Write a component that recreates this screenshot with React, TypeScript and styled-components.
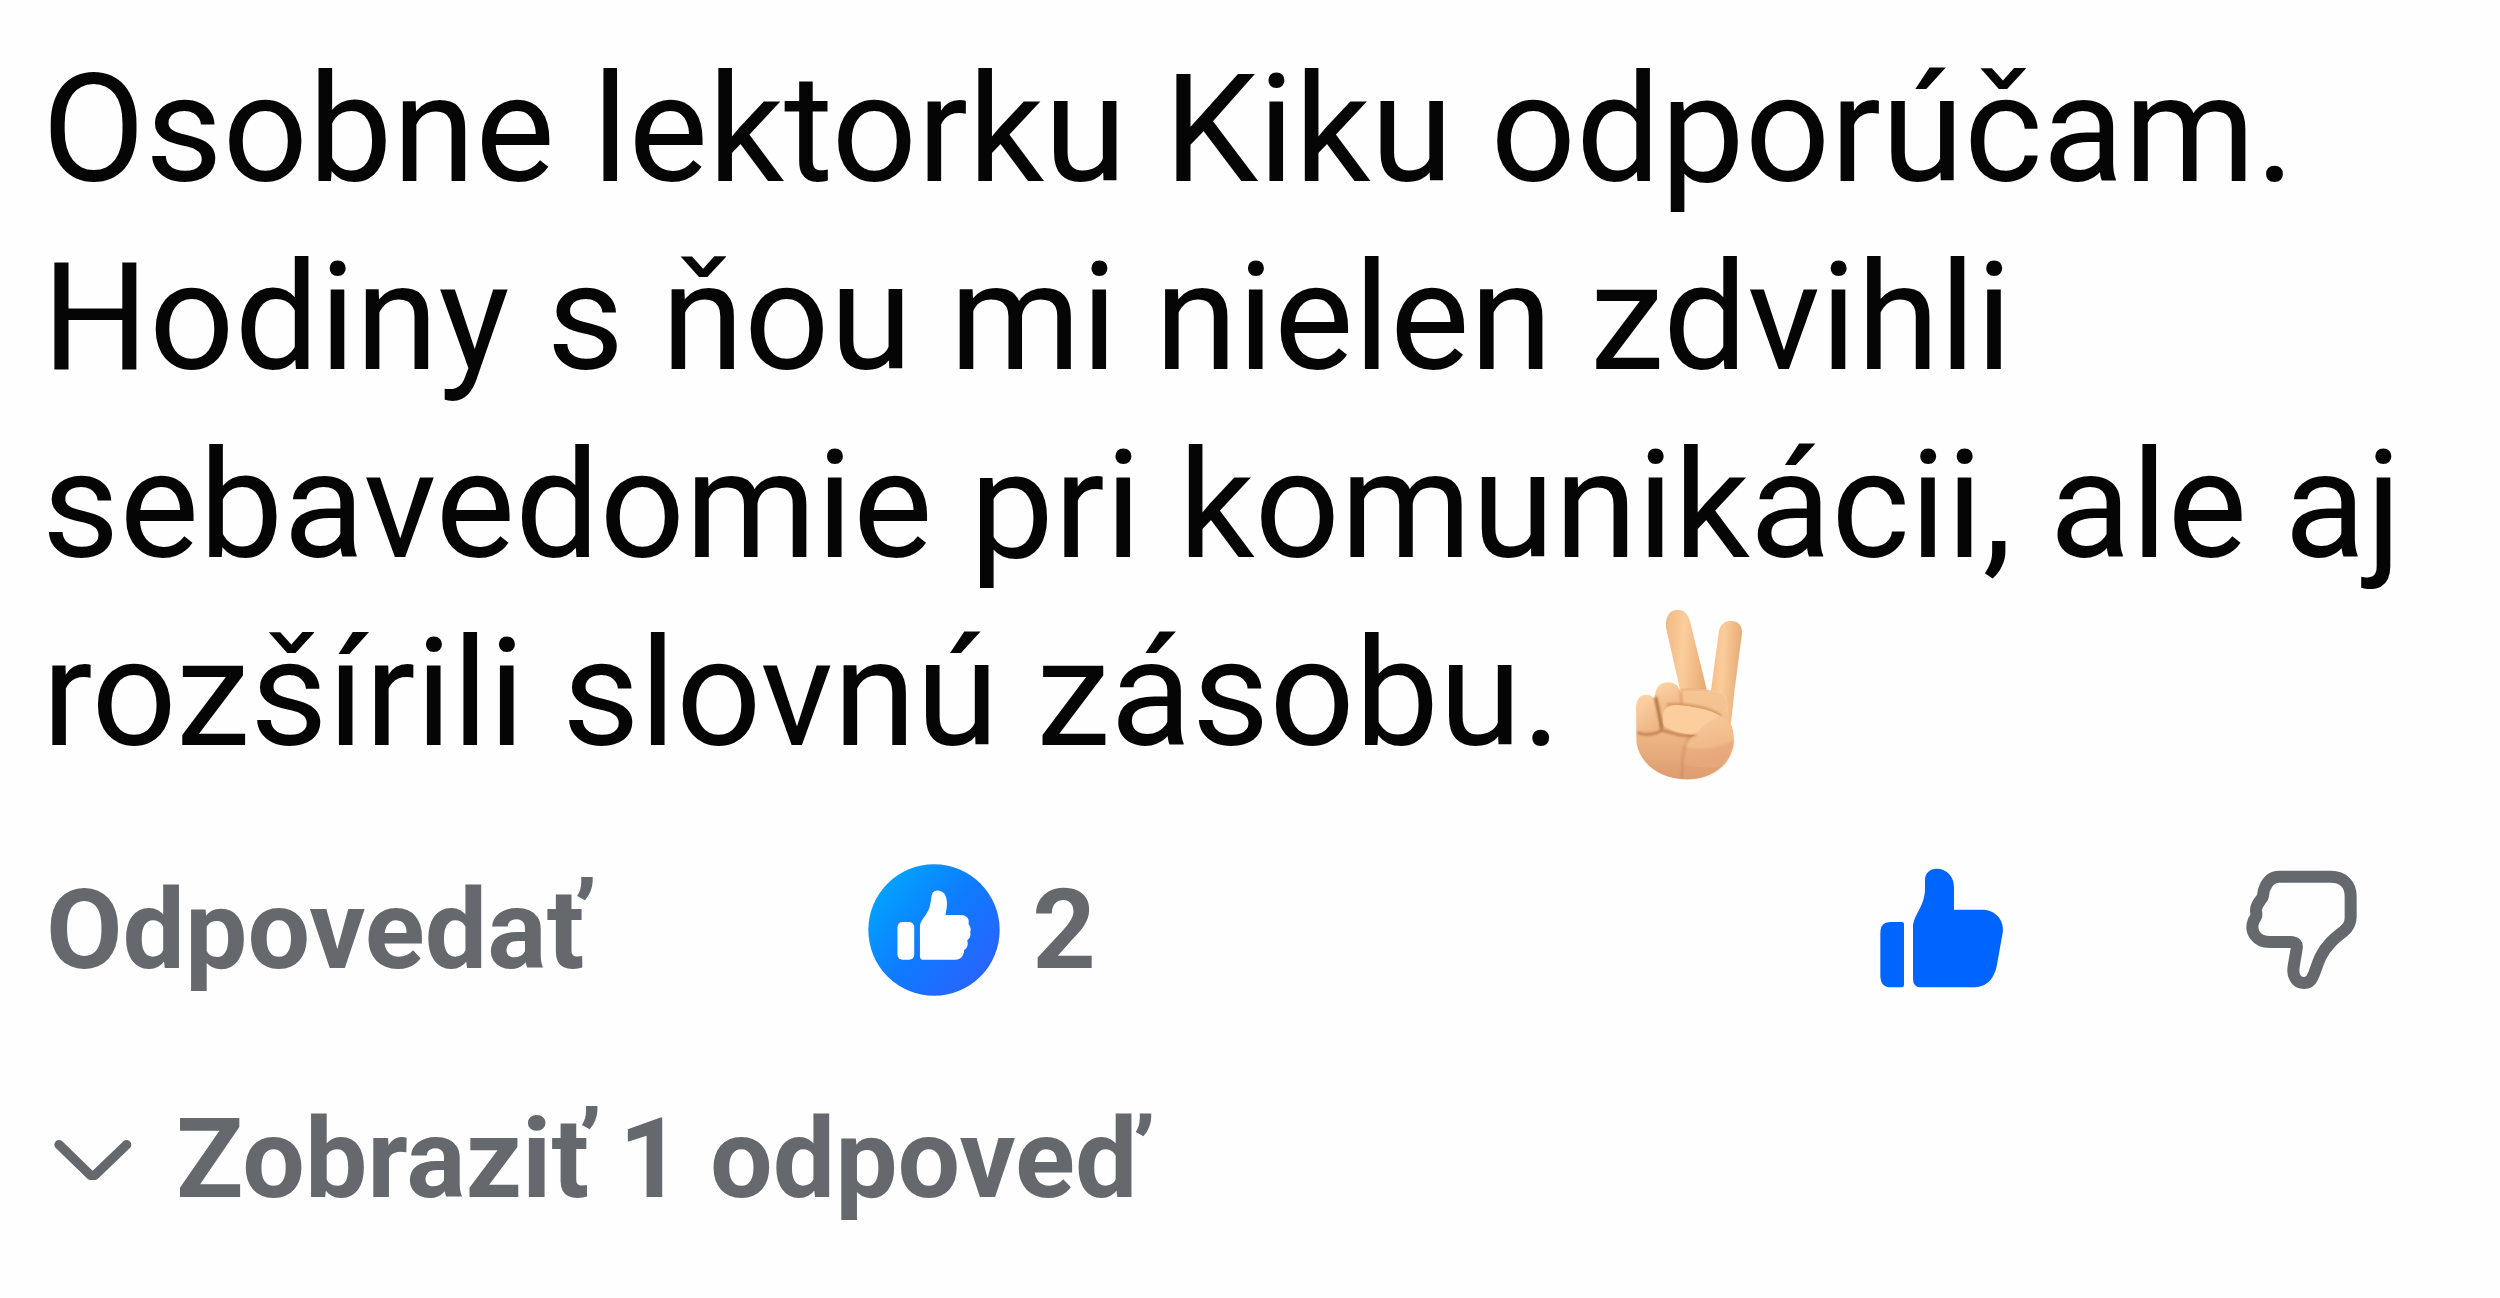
import React from "react";
import styled, { createGlobalStyle } from "styled-components";

const GlobalStyle = createGlobalStyle`
  body {
    margin: 0;
    background: #fefefe;
    font-family: Roboto, "Noto Sans", sans-serif;
  }
`;

const Comment = styled.article`
  padding: 36px 42px;
`;

const Message = styled.p`
  margin: 0;
  color: #050505;
  font-size: 150px;
  line-height: 188px;
`;

const Emoji = styled.svg`
  width: 108px;
  height: 172px;
  margin-left: 36px;
  vertical-align: -35px;
`;

const Actions = styled.div`
  display: grid;
  grid-template-columns: 36% 1fr auto auto;
  align-items: center;
  margin-top: 76px;
  padding: 0 100px 0 4px;
`;

const TextButton = styled.button`
  display: flex;
  align-items: center;
  gap: 44px;
  padding: 0;
  border: 0;
  background: none;
  color: #65686c;
  font: 700 111px/130px Roboto, "Noto Sans", sans-serif;
  white-space: nowrap;
  cursor: pointer;
`;

const Reactions = styled(TextButton)`
  gap: 32px;
  margin-left: -10px;
`;

const IconButton = styled.button<{ $gap?: number }>`
  display: flex;
  padding: 0;
  margin-left: ${(p) => p.$gap ?? 0}px;
  border: 0;
  background: none;
  cursor: pointer;
`;

const Replies = styled.div`
  margin-top: 98px;
  padding-left: 12px;
`;

const PeaceHand = () => (
  <Emoji viewBox="108 54 324 516" role="img" aria-label="✌🏼">
    <defs>
      <linearGradient id="palm" x1="0" y1="0" x2="0" y2="1">
        <stop offset="0" stopColor="#fbd0a0" />
        <stop offset="0.5" stopColor="#efb786" />
        <stop offset="1" stopColor="#dc9c70" />
      </linearGradient>
      <linearGradient id="finger" x1="0" y1="0" x2="1" y2="0.15">
        <stop offset="0" stopColor="#f0b983" />
        <stop offset="0.45" stopColor="#fbcd9b" />
        <stop offset="1" stopColor="#e8ab76" />
      </linearGradient>
      <linearGradient id="thumb" x1="0" y1="0" x2="0.4" y2="1">
        <stop offset="0" stopColor="#ffd6a8" />
        <stop offset="1" stopColor="#efb585" />
      </linearGradient>
      <filter id="soften" x="-20%" y="-20%" width="140%" height="140%">
        <feGaussianBlur stdDeviation="3" />
      </filter>
    </defs>
    <path d="M336 300L360 122C366 100 380 93 396 93C418 93 430 106 429 130L406 305L396 400L330 350Z" fill="url(#finger)" />
    <path d="M244 303L202 118C197 82 210 60 235 59C256 59 267 72 273 94L322 293L330 340L250 350Z" fill="url(#finger)" />
    <path d="M112 425L150 330L244 301C285 292 355 296 380 320L395 400C405 424 407 452 402 472C386 532 334 568 263 568C176 568 118 514 112 454Z" fill="url(#palm)" />
    <path d="M245 302C286 295 344 296 374 318C390 344 380 366 361 376C330 360 280 354 249 346Z" fill="#f4c08e" opacity=".7" />
    <path d="M246 302C270 296 296 298 322 298" fill="none" stroke="#d99a68" strokeWidth="6" opacity=".6" filter="url(#soften)" />
    <path d="M111 352C112 327 123 314 142 314C158 314 167 324 171 344L187 408C190 423 178 430 158 431C134 434 117 430 112 422Z" fill="url(#thumb)" />
    <path d="M168 318C170 290 184 278 207 277C232 278 243 292 247 318L250 348L196 372L184 356Z" fill="url(#thumb)" />
    <g fill="none" strokeLinecap="round" filter="url(#soften)">
      <path d="M170 324C176 350 184 386 188 414" stroke="#a0602f" strokeWidth="10" opacity=".8" />
      <path d="M118 429C140 437 174 433 188 421C218 426 244 442 288 437" stroke="#b06c3c" strokeWidth="8" opacity=".7" />
      <path d="M207 344C254 340 329 352 364 377" stroke="#b9763f" strokeWidth="8" opacity=".6" />
      <path d="M245 306L249 344" stroke="#d08f5a" strokeWidth="7" opacity=".6" />
    </g>
    <path d="M193 388C189 360 205 345 235 345C280 350 335 358 365 379C390 390 401 412 402 440C404 470 396 500 376 524C330 540 280 530 251 520C249 480 252 446 291 434C254 434 213 421 198 409C194 405 192 398 193 388Z" fill="url(#thumb)" opacity=".75" />
    <path d="M193 388C189 360 205 345 235 345C280 350 335 358 365 379C340 384 310 410 291 434C254 434 213 421 198 409C194 405 192 398 193 388Z" fill="#fdcf9f" opacity=".85" />
    <path d="M251 470C300 480 360 478 404 450C401 524 340 568 263 568C256 568 250 567 249 566Z" fill="#e2a176" opacity=".55" filter="url(#soften)" />
    <path d="M291 434C262 438 251 464 249 560" fill="none" stroke="#bd7c50" strokeWidth="6" strokeLinecap="round" opacity=".5" filter="url(#soften)" />
  </Emoji>
);

const LikeBadge = () => (
  <svg width="132" height="132" viewBox="50 40 394 394" aria-hidden="true">
    <defs>
      <linearGradient id="badge" x1="0.08" y1="0.15" x2="0.92" y2="0.85">
        <stop offset="0" stopColor="#02a4fd" />
        <stop offset="0.5" stopColor="#0f7bff" />
        <stop offset="1" stopColor="#2b62fc" />
      </linearGradient>
    </defs>
    <circle cx="247" cy="237" r="196" fill="url(#badge)" />
    <rect x="138" y="213" width="50" height="113" rx="15" fill="#fff" />
    <path d="M205 315V230C205 213 212 207 222 192C239 168 236 151 241 130C246 115 269 116 279 130C290 148 285 174 281 192H327C345 192 354 205 350 219C357 228 358 237 355 244C358 254 353 263 346 268C350 280 347 290 337 297C336 316 326 326 311 326H216Q205 326 205 315Z" fill="#fff" />
  </svg>
);

const ThumbUp = () => (
  <svg width="123" height="124" viewBox="64 51 369 372" aria-hidden="true">
    <path d="M96 213H130Q136 213 136 219V402Q136 409 129 409H98Q65 409 65 374V246Q65 213 96 213Z" fill="#0064ff" />
    <path d="M163 383V230C163 191 199 169 199 112V87C199 65 215 53 234 53C264 53 286 77 286 108V176H370C410 176 438 207 432 245L416 335C408 383 387 409 340 409H188Q163 409 163 383Z" fill="#0064ff" />
  </svg>
);

const ThumbDown = () => (
  <svg width="112" height="120" viewBox="48 64 336 360" aria-hidden="true">
    <path d="M148 84H302C340 84 362 108 362 143V205C362 225 356 235 341 248C311 271 288 291 272 324C259 351 256 370 247 387C236 410 205 407 195 387C187 374 190 358 193 341L200 300Q204 280 181 280H119C80 280 58 249 71 216C78 204 81 204 78 187C77 169 88 160 97 147C101 140 99 132 103 121C111 99 124 84 148 84Z" fill="none" stroke="#65686c" strokeWidth="36" strokeLinejoin="round" />
  </svg>
);

const Chevron = () => (
  <svg width="78" height="42" viewBox="68 178 234 126" aria-hidden="true">
    <path d="M83 198L175 287Q184 296 193 287L286 198" fill="none" stroke="#65686c" strokeWidth="28" strokeLinecap="round" />
  </svg>
);

export default function App() {
  return (
    <>
      <GlobalStyle />
      <Comment lang="sk">
        <Message>
          Osobne lektorku Kiku odporúčam. Hodiny s ňou mi nielen zdvihli
          sebavedomie pri komunikácii, ale aj rozšírili slovnú zásobu.{" "}
          <PeaceHand />
        </Message>
        <Actions>
          <TextButton type="button">Odpovedať</TextButton>
          <Reactions type="button" aria-label="Reakcie: 2">
            <LikeBadge />
            2
          </Reactions>
          <IconButton type="button" aria-label="Páči sa mi to" aria-pressed="true">
            <ThumbUp />
          </IconButton>
          <IconButton type="button" aria-label="Nepáči sa mi to" $gap={243}>
            <ThumbDown />
          </IconButton>
        </Actions>
        <Replies>
          <TextButton type="button">
            <Chevron />
            Zobraziť 1 odpoveď
          </TextButton>
        </Replies>
      </Comment>
    </>
  );
}
